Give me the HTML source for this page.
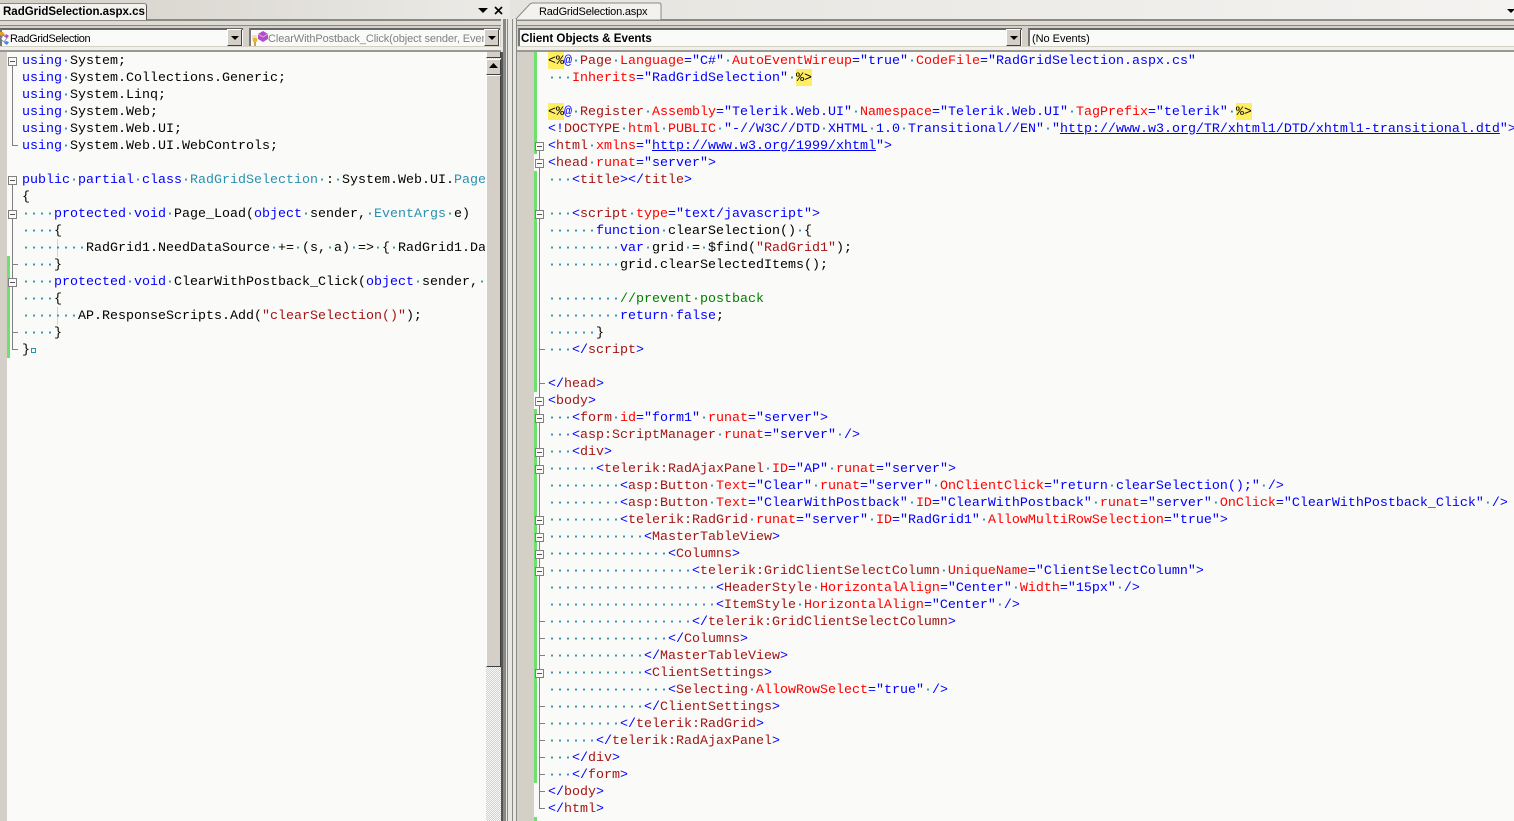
<!DOCTYPE html>
<html><head><meta charset="utf-8"><title>RadGridSelection</title>
<style>
html,body{margin:0;padding:0;width:1514px;height:821px;overflow:hidden;background:#fafaf8}
body{position:relative;font-family:"Liberation Sans",sans-serif;font-size:11px;color:#000}
.a{position:absolute}
pre{position:absolute;top:53px;margin:0;font:13.33px/17px "Liberation Mono",monospace;color:#000;white-space:pre}
pre b,pre a{color:#00f;font-weight:normal}
pre a{text-decoration:underline}
pre s{color:#a31515;text-decoration:none}
pre u{color:#f00;text-decoration:none}
pre i{color:#2b91af;font-style:normal;font-weight:bold}
pre em{color:#2b91af;font-style:normal}
pre tt{color:#008000;font:inherit}
pre mark{background:#ffee62;color:#000;display:inline-block;height:17px;line-height:19px;margin-top:-1px;vertical-align:top}
.box{position:absolute;width:7px;height:7px;border:1px solid #808080;background:#fafaf8}
.box:after{content:"";position:absolute;left:1px;top:3px;width:5px;height:1px;background:#555}
.v{position:absolute;width:1px;background:#808080}
.h{position:absolute;height:1px;background:#808080;width:6px}
.g{position:absolute;background:#6ee06e}
.combo{position:absolute;top:28px;height:18px;background:#fafaf8;border-top:2px solid #666;border-left:2px solid #777;box-sizing:border-box;line-height:18px;white-space:nowrap;overflow:hidden}
.btn{position:absolute;top:29px;width:15px;height:17px;box-sizing:border-box;background:#d4d0c8;border:1px solid;border-color:#fff #404040 #404040 #fff}
.btn:after{content:"";position:absolute;left:3px;top:6px;border:4px solid transparent;border-top:4px solid #000;border-bottom:0}
</style></head>
<body>
<!-- top bands -->
<div class="a" style="left:0;top:0;width:510px;height:19px;background:linear-gradient(90deg,#d4d0c8,#ecebe7)"></div>
<div class="a" style="left:510px;top:0;width:1004px;height:19px;background:linear-gradient(90deg,#e6e4df,#f4f3f1)"></div>
<div class="a" style="left:0;top:19px;width:1514px;height:33px;background:#d4d0c8"></div>
<div class="a" style="left:0;top:19px;width:1514px;height:2px;background:#8a8a84"></div>
<div class="a" style="left:0;top:21px;width:1514px;height:4px;background:#dedbd5"></div>
<div class="a" style="left:0;top:25px;width:1514px;height:1px;background:#888"></div>
<div class="a" style="left:0;top:47px;width:1514px;height:3px;background:#f0efeb"></div>
<div class="a" style="left:0;top:50px;width:1514px;height:2px;background:#9a9890"></div>

<!-- left tab -->
<div class="a" style="left:0;top:3px;width:147px;height:17px;box-sizing:border-box;background:#f3f2ef;border-top:1px solid #8a8a84;border-right:1px solid #555;border-top-right-radius:3px;font-weight:bold;font-size:11.5px;line-height:17px;padding-left:3px;white-space:nowrap;overflow:hidden">RadGridSelection.aspx.cs</div>
<!-- right tab -->
<svg class="a" style="left:514px;top:1px" width="150" height="20"><path d="M1 19 L16 3 Q17 2 19 2 L145 2 Q147 2 147 4 L147 19 Z" fill="#f3f2ef" stroke="#8a8a84"/></svg>
<div class="a" style="left:539px;top:4px;line-height:17px;font-size:11px;letter-spacing:-.2px;white-space:nowrap">RadGridSelection.aspx</div>
<!-- window icons -->
<svg class="a" style="left:476px;top:5px" width="30" height="12"><path d="M2 3h10l-5 5z" fill="#000"/><path d="M19 2l7 7M26 2l-7 7" stroke="#000" stroke-width="1.6" fill="none"/></svg>
<svg class="a" style="left:1506px;top:8px" width="8" height="6"><path d="M1 1h8l-4 4z" fill="#000"/></svg>

<!-- combos -->
<div class="combo" style="left:0;width:243px"></div>
<div class="a" style="left:10px;top:31px;line-height:16px;font-size:11px;letter-spacing:-.37px;white-space:nowrap">RadGridSelection</div>
<svg class="a" style="left:0;top:31px" width="10" height="15"><path d="M0 1l3 0 2 3-2 2-3-2z" fill="#e8a020"/><path d="M3 4l4 3-3 4-3-3z" fill="#fff" stroke="#7a7aa8" stroke-width=".8"/><path d="M6 3l3 2-2 2-2-2z" fill="#c040c0"/><path d="M6 10l3 1-2 3-3-2z" fill="#3a8ae0"/></svg>
<div class="btn" style="left:227px"></div>
<div class="combo" style="left:249px;width:251px"></div>
<div class="a" style="left:268px;top:31px;width:216px;overflow:hidden;line-height:16px;font-size:11px;letter-spacing:-.1px;color:#808080;white-space:nowrap">ClearWithPostback_Click(object sender, EventArgs e)</div>
<svg class="a" style="left:251px;top:30px" width="17" height="16"><path d="M12 1l5 3v5l-5 3-5-3V4z" fill="#b050c8"/><path d="M7 4l5 3 5-3" fill="none" stroke="#e8b0f0" stroke-width=".8"/><path d="M1 6h5M1 8h5" stroke="#e0c890"/><circle cx="4" cy="10" r="2.4" fill="#e8b830"/><path d="M4 12v4" stroke="#c09020" stroke-width="1.6"/></svg>
<div class="btn" style="left:484px"></div>
<div class="combo" style="left:518px;width:504px;font-weight:bold;padding-left:1px;font-size:11.6px;color:#000">Client Objects &amp; Events</div>
<div class="btn" style="left:1006px"></div>
<div class="combo" style="left:1028px;width:486px;padding-left:2px;font-size:11px;letter-spacing:-.03px">(No Events)</div>

<!-- left gutter -->
<div class="a" style="left:0;top:52px;width:7px;height:769px;background:#d4d0c8"></div>
<div class="g" style="left:7px;top:256px;width:3px;height:102px"></div>

<!-- left outline -->
<div class="v" style="left:12px;top:57px;height:88px"></div><div class="h" style="left:12px;top:145px"></div>
<div class="v" style="left:12px;top:180px;height:170px"></div>
<div class="h" style="left:12px;top:264px"></div><div class="h" style="left:12px;top:332px"></div><div class="h" style="left:12px;top:349px"></div>
<div class="box" style="left:8px;top:57px"></div>
<div class="box" style="left:8px;top:176px"></div>
<div class="box" style="left:8px;top:210px"></div>
<div class="box" style="left:8px;top:278px"></div>
<div class="a" style="left:57px;top:239px;width:1px;height:18px;background:#e4cccc"></div>
<div class="a" style="left:57px;top:307px;width:1px;height:18px;background:#e4cccc"></div>
<div class="a" style="left:31px;top:348px;width:3px;height:3px;border:1px solid #2b91af"></div>

<!-- left code -->
<div class="a" style="left:0;top:52px;width:485px;height:769px;overflow:hidden">
<pre style="left:22px;top:1px"><b>using</b><i>·</i>System;
<b>using</b><i>·</i>System.Collections.Generic;
<b>using</b><i>·</i>System.Linq;
<b>using</b><i>·</i>System.Web;
<b>using</b><i>·</i>System.Web.UI;
<b>using</b><i>·</i>System.Web.UI.WebControls;

<b>public</b><i>·</i><b>partial</b><i>·</i><b>class</b><i>·</i><em>RadGridSelection</em><i>·</i>:<i>·</i>System.Web.UI.<em>Page</em>
{
<i>····</i><b>protected</b><i>·</i><b>void</b><i>·</i>Page_Load(<b>object</b><i>·</i>sender,<i>·</i><em>EventArgs</em><i>·</i>e)
<i>····</i>{
<i>········</i>RadGrid1.NeedDataSource<i>·</i>+=<i>·</i>(s,<i>·</i>a)<i>·</i>=&gt;<i>·</i>{<i>·</i>RadGrid1.DataSource
<i>····</i>}
<i>····</i><b>protected</b><i>·</i><b>void</b><i>·</i>ClearWithPostback_Click(<b>object</b><i>·</i>sender,<i>·</i>EventArgs
<i>····</i>{
<i>·······</i>AP.ResponseScripts.Add(<s>"clearSelection()"</s>);
<i>····</i>}
}</pre>
</div>

<!-- scrollbar -->
<div class="a" style="left:486px;top:52px;width:15px;height:769px;background:conic-gradient(#d4d0c8 25%,#fafaf8 0 50%,#d4d0c8 0 75%,#fafaf8 0) 0 0/2px 2px"></div>
<div class="a" style="left:486px;top:52px;width:15px;height:6px;box-sizing:border-box;background:#d4d0c8;border-right:1px solid #404040;border-bottom:1px solid #404040;border-left:1px solid #fff"></div>
<div class="a" style="left:486px;top:59px;width:15px;height:16px;box-sizing:border-box;background:#d4d0c8;border:1px solid;border-color:#fff #404040 #404040 #fff"></div>
<svg class="a" style="left:489px;top:63px" width="10" height="6"><path d="M0 5h9L4.500 0z" fill="#000"/></svg>
<div class="a" style="left:486px;top:75px;width:15px;height:592px;box-sizing:border-box;background:#d4d0c8;border:1px solid;border-color:#fff #404040 #404040 #fff"></div>

<!-- divider -->
<div class="a" style="left:501px;top:19px;width:15px;height:802px;background:#e9e7e3"></div>
<div class="a" style="left:501px;top:52px;width:2px;height:769px;background:#555"></div>
<div class="a" style="left:503px;top:19px;width:3px;height:802px;background:#8a8a84"></div>
<div class="a" style="left:507px;top:19px;width:1px;height:802px;background:#8a8a84"></div>
<div class="a" style="left:512px;top:19px;width:1px;height:802px;background:#8a8a84"></div>
<div class="a" style="left:516px;top:19px;width:1px;height:802px;background:#8a8a84"></div>

<!-- right gutter -->
<div class="a" style="left:517px;top:52px;width:17px;height:769px;background:#d4d0c8"></div>
<div class="g" style="left:534px;top:52px;width:3px;height:102px"></div>
<div class="g" style="left:534px;top:171px;width:3px;height:221px"></div>
<div class="g" style="left:534px;top:409px;width:3px;height:374px"></div>
<div class="g" style="left:534px;top:817px;width:3px;height:4px"></div>

<!-- right outline -->
<div class="v" style="left:539px;top:146px;height:663px"></div>
<div class="h" style="left:539px;top:349px"></div><div class="h" style="left:539px;top:383px"></div>
<div class="h" style="left:539px;top:621px"></div><div class="h" style="left:539px;top:638px"></div>
<div class="h" style="left:539px;top:655px"></div><div class="h" style="left:539px;top:706px"></div>
<div class="h" style="left:539px;top:723px"></div><div class="h" style="left:539px;top:740px"></div>
<div class="h" style="left:539px;top:757px"></div><div class="h" style="left:539px;top:774px"></div>
<div class="h" style="left:539px;top:791px"></div><div class="h" style="left:539px;top:808px"></div>
<div class="box" style="left:535px;top:142px"></div>
<div class="box" style="left:535px;top:159px"></div>
<div class="box" style="left:535px;top:210px"></div>
<div class="box" style="left:535px;top:397px"></div>
<div class="box" style="left:535px;top:414px"></div>
<div class="box" style="left:535px;top:448px"></div>
<div class="box" style="left:535px;top:465px"></div>
<div class="box" style="left:535px;top:516px"></div>
<div class="box" style="left:535px;top:533px"></div>
<div class="box" style="left:535px;top:550px"></div>
<div class="box" style="left:535px;top:567px"></div>
<div class="box" style="left:535px;top:669px"></div>

<!-- right code -->
<pre style="left:548px"><mark>&lt;%</mark><b>@</b><i>·</i><s>Page</s><i>·</i><u>Language</u><b>="C#"</b><i>·</i><u>AutoEventWireup</u><b>="true"</b><i>·</i><u>CodeFile</u><b>="RadGridSelection.aspx.cs"</b>
<i>···</i><u>Inherits</u><b>="RadGridSelection"</b><i>·</i><mark>%&gt;</mark>

<mark>&lt;%</mark><b>@</b><i>·</i><s>Register</s><i>·</i><u>Assembly</u><b>="Telerik.Web.UI"</b><i>·</i><u>Namespace</u><b>="Telerik.Web.UI"</b><i>·</i><u>TagPrefix</u><b>="telerik"</b><i>·</i><mark>%&gt;</mark>
<b>&lt;!</b><s>DOCTYPE</s><i>·</i><u>html</u><i>·</i><u>PUBLIC</u><i>·</i><b>"-//W3C//DTD</b><i>·</i><b>XHTML</b><i>·</i><b>1.0</b><i>·</i><b>Transitional//EN"</b><i>·</i><b>"</b><a>http://www.w3.org/TR/xhtml1/DTD/xhtml1-transitional.dtd</a><b>"&gt;</b>
<b>&lt;</b><s>html</s><i>·</i><u>xmlns</u><b>="</b><a>http://www.w3.org/1999/xhtml</a><b>"&gt;</b>
<b>&lt;</b><s>head</s><i>·</i><u>runat</u><b>="server"&gt;</b>
<i>···</i><b>&lt;</b><s>title</s><b>&gt;&lt;/</b><s>title</s><b>&gt;</b>

<i>···</i><b>&lt;</b><s>script</s><i>·</i><u>type</u><b>="text/javascript"&gt;</b>
<i>······</i><b>function</b><i>·</i>clearSelection()<i>·</i>{
<i>·········</i><b>var</b><i>·</i>grid<i>·</i>=<i>·</i>$find(<s>"RadGrid1"</s>);
<i>·········</i>grid.clearSelectedItems();

<i>·········</i><tt>//prevent·postback</tt>
<i>·········</i><b>return</b><i>·</i><b>false</b>;
<i>······</i>}
<i>···</i><b>&lt;/</b><s>script</s><b>&gt;</b>

<b>&lt;/</b><s>head</s><b>&gt;</b>
<b>&lt;</b><s>body</s><b>&gt;</b>
<i>···</i><b>&lt;</b><s>form</s><i>·</i><u>id</u><b>="form1"</b><i>·</i><u>runat</u><b>="server"&gt;</b>
<i>···</i><b>&lt;</b><s>asp:ScriptManager</s><i>·</i><u>runat</u><b>="server"</b><i>·</i><b>/&gt;</b>
<i>···</i><b>&lt;</b><s>div</s><b>&gt;</b>
<i>······</i><b>&lt;</b><s>telerik:RadAjaxPanel</s><i>·</i><u>ID</u><b>="AP"</b><i>·</i><u>runat</u><b>="server"&gt;</b>
<i>·········</i><b>&lt;</b><s>asp:Button</s><i>·</i><u>Text</u><b>="Clear"</b><i>·</i><u>runat</u><b>="server"</b><i>·</i><u>OnClientClick</u><b>="return</b><i>·</i><b>clearSelection();"</b><i>·</i><b>/&gt;</b>
<i>·········</i><b>&lt;</b><s>asp:Button</s><i>·</i><u>Text</u><b>="ClearWithPostback"</b><i>·</i><u>ID</u><b>="ClearWithPostback"</b><i>·</i><u>runat</u><b>="server"</b><i>·</i><u>OnClick</u><b>="ClearWithPostback_Click"</b><i>·</i><b>/&gt;</b>
<i>·········</i><b>&lt;</b><s>telerik:RadGrid</s><i>·</i><u>runat</u><b>="server"</b><i>·</i><u>ID</u><b>="RadGrid1"</b><i>·</i><u>AllowMultiRowSelection</u><b>="true"&gt;</b>
<i>············</i><b>&lt;</b><s>MasterTableView</s><b>&gt;</b>
<i>···············</i><b>&lt;</b><s>Columns</s><b>&gt;</b>
<i>··················</i><b>&lt;</b><s>telerik:GridClientSelectColumn</s><i>·</i><u>UniqueName</u><b>="ClientSelectColumn"&gt;</b>
<i>·····················</i><b>&lt;</b><s>HeaderStyle</s><i>·</i><u>HorizontalAlign</u><b>="Center"</b><i>·</i><u>Width</u><b>="15px"</b><i>·</i><b>/&gt;</b>
<i>·····················</i><b>&lt;</b><s>ItemStyle</s><i>·</i><u>HorizontalAlign</u><b>="Center"</b><i>·</i><b>/&gt;</b>
<i>··················</i><b>&lt;/</b><s>telerik:GridClientSelectColumn</s><b>&gt;</b>
<i>···············</i><b>&lt;/</b><s>Columns</s><b>&gt;</b>
<i>············</i><b>&lt;/</b><s>MasterTableView</s><b>&gt;</b>
<i>············</i><b>&lt;</b><s>ClientSettings</s><b>&gt;</b>
<i>···············</i><b>&lt;</b><s>Selecting</s><i>·</i><u>AllowRowSelect</u><b>="true"</b><i>·</i><b>/&gt;</b>
<i>············</i><b>&lt;/</b><s>ClientSettings</s><b>&gt;</b>
<i>·········</i><b>&lt;/</b><s>telerik:RadGrid</s><b>&gt;</b>
<i>······</i><b>&lt;/</b><s>telerik:RadAjaxPanel</s><b>&gt;</b>
<i>···</i><b>&lt;/</b><s>div</s><b>&gt;</b>
<i>···</i><b>&lt;/</b><s>form</s><b>&gt;</b>
<b>&lt;/</b><s>body</s><b>&gt;</b>
<b>&lt;/</b><s>html</s><b>&gt;</b></pre>
</body></html>
